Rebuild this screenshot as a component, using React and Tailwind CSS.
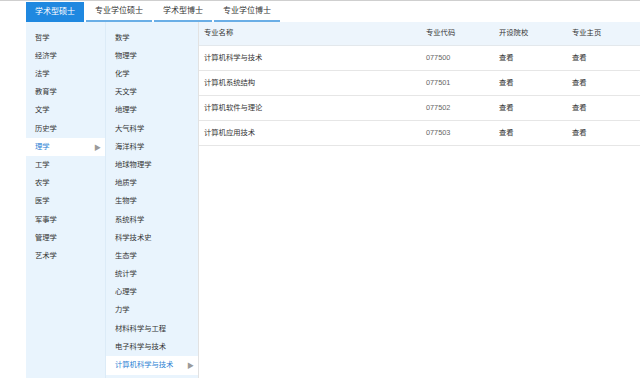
import React from 'react';

const tabs = ['学术型硕士', '专业学位硕士', '学术型博士', '专业学位博士'];

const categories = ['哲学', '经济学', '法学', '教育学', '文学', '历史学', '理学', '工学', '农学', '医学', '军事学', '管理学', '艺术学'];

const subjects = [
  '数学', '物理学', '化学', '天文学', '地理学', '大气科学', '海洋科学', '地球物理学', '地质学', '生物学',
  '系统科学', '科学技术史', '生态学', '统计学', '心理学', '力学', '材料科学与工程', '电子科学与技术', '计算机科学与技术',
];

const majors = [
  { name: '计算机科学与技术', code: '077500' },
  { name: '计算机系统结构', code: '077501' },
  { name: '计算机软件与理论', code: '077502' },
  { name: '计算机应用技术', code: '077503' },
];

const Arrow = () => <span className="text-[7px] text-[#9a9a9a] leading-none">▶</span>;

const MenuItem = ({ label, active }) => (
  <div
    className={`h-[18.2px] flex items-center justify-between pl-[9px] pr-[4px] ${
      active ? 'bg-white text-[#2a7fd4]' : 'text-[#333]'
    }`}
  >
    <span>{label}</span>
    {active && <Arrow />}
  </div>
);

export default function App() {
  return (
    <div
      className="w-[640px] h-[378px] bg-white overflow-hidden text-[7.3px] border-t border-[#cfcfcf]"
      style={{ fontFamily: '"Liberation Sans", "Noto Sans CJK SC", sans-serif' }}
    >
      <div className="flex gap-[2px] pl-[26px] pt-[1px] h-[21px]">
        {tabs.map((t, i) => (
          <div
            key={t}
            className={`flex items-center px-[9px] text-[8px] ${
              i === 0
                ? 'bg-[#1f88e0] text-white'
                : 'bg-white text-[#333] border-b-2 border-[#6aaee6]'
            }`}
          >
            {t}
          </div>
        ))}
      </div>

      <div className="flex h-[356px] pl-[26px]">
        <div className="w-[79px] bg-[#e9f4fd] pt-[7px]">
          {categories.map((c) => (
            <MenuItem key={c} label={c} active={c === '理学'} />
          ))}
        </div>
        <div className="w-[94px] bg-[#e9f4fd] pt-[7px] border-l border-[#dcebf7] border-r border-r-[#e2e2e2]">
          {subjects.map((s) => (
            <MenuItem key={s} label={s} active={s === '计算机科学与技术'} />
          ))}
        </div>
        <div className="flex-1">
          <div className="grid grid-cols-[222px_73px_73px_1fr] h-[24px] items-center bg-[#edf5fc] border-b border-[#e3e8ec] text-[#333]">
            <div className="pl-[5px]">专业名称</div>
            <div className="pl-[5px]">专业代码</div>
            <div className="pl-[5px]">开设院校</div>
            <div className="pl-[5px]">专业主页</div>
          </div>
          {majors.map((m) => (
            <div
              key={m.code}
              className="grid grid-cols-[222px_73px_73px_1fr] h-[25px] items-center border-b border-[#e6e6e6] text-[#333]"
            >
              <div className="pl-[5px]">{m.name}</div>
              <div className="pl-[5px] text-[#666]">{m.code}</div>
              <div className="pl-[5px]">查看</div>
              <div className="pl-[5px]">查看</div>
            </div>
          ))}
        </div>
      </div>
    </div>
  );
}
